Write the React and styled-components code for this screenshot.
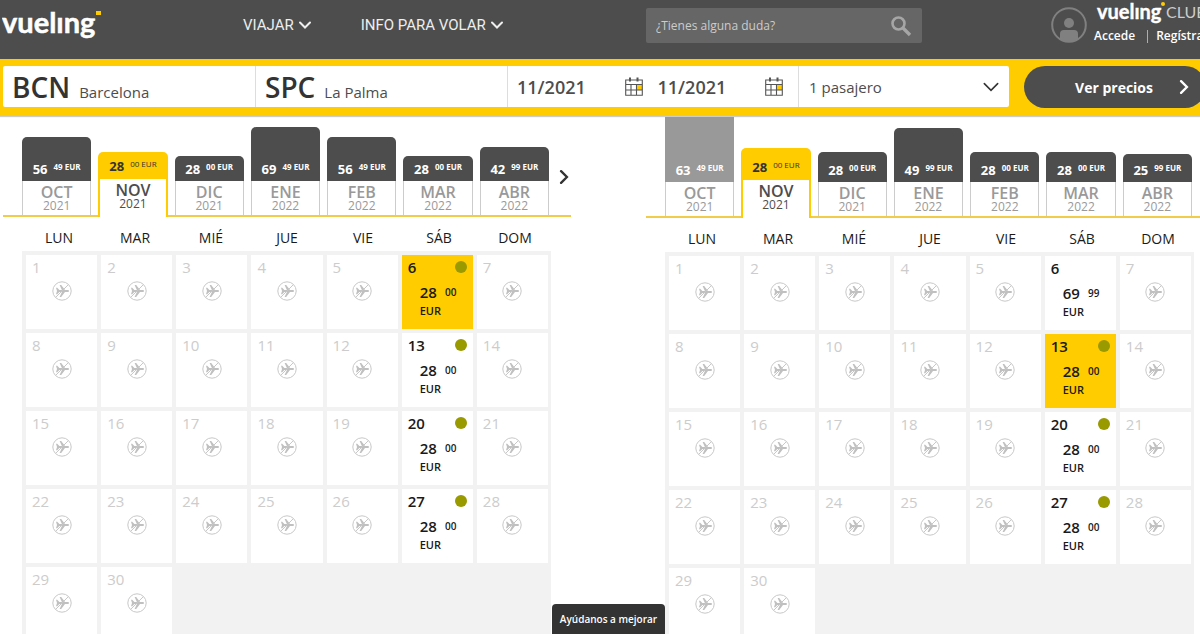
import styled, { createGlobalStyle } from "styled-components";

const GlobalStyle = createGlobalStyle`
  * {
    box-sizing: border-box;
  }
  body {
    margin: 0;
    overflow-x: hidden;
    background: #ffffff;
    color: #333333;
    font-family: "Open Sans", "Noto Sans", sans-serif;
  }
  button, input, select {
    font-family: inherit;
    border: 0;
    margin: 0;
    padding: 0;
    background: none;
    color: inherit;
  }
  a {
    color: inherit;
    text-decoration: none;
  }
`;

const Page = styled.div`
  overflow: hidden;
`;

const Header = styled.header`
  display: flex;
  align-items: flex-start;
  height: 59px;
  background: #4d4d4d;
  color: #ffffff;
`;

const LogoLink = styled.a`
  flex: 0 0 240px;
  padding-left: 2px;
`;

const LogoSvg = styled.svg`
  display: block;
  font-family: Lato, sans-serif;
  font-weight: 700;
`;

const Nav = styled.nav`
  display: flex;
  flex: 1;
  gap: 50px;
  padding: 15px 0 0 3px;
`;

const NavButton = styled.button`
  display: flex;
  align-items: center;
  gap: 5px;
  height: 20px;
  color: #eeeeee;
  font-family: Roboto, sans-serif;
  font-size: 15px;
  white-space: nowrap;
`;

const SearchBox = styled.form`
  display: flex;
  align-items: center;
  width: 276px;
  height: 35px;
  margin-top: 8px;
  padding: 0 10px;
  border-radius: 2px;
  background: #666666;
  input {
    flex: 1;
    min-width: 0;
    font-size: 12px;
    outline: none;
  }
  input::placeholder {
    color: #cccccc;
    opacity: 1;
  }
  button {
    display: flex;
  }
`;

const Account = styled.div`
  display: flex;
  gap: 7px;
  width: 278px;
  padding-left: 129px;
  margin-top: 7px;
  > svg {
    flex: none;
  }
`;

const AccountText = styled.div`
  flex: none;
  margin-top: -7px;
`;

const AccountLinks = styled.div`
  display: flex;
  font-size: 12px;
  line-height: 16px;
  font-weight: 600;
`;

const Separator = styled.span`
  width: 1px;
  height: 13px;
  margin: 2px 8px 0 12px;
  background: #d9b31a;
`;

const SearchBar = styled.form`
  display: flex;
  height: 57px;
  padding: 7px 0 0 3px;
  background: #ffcc00;
  box-shadow: 0 1px 1px #cccccc;
`;

const Fields = styled.div`
  display: grid;
  grid-template-columns: 252fr 252fr 291fr 211fr;
  flex: 1;
  height: 41px;
  border-radius: 2px;
  background: #ffffff;
`;

const Field = styled.div`
  display: flex;
  align-items: center;
  min-width: 0;
  padding-left: 9px;
  border-left: ${({ $first }) => ($first ? "0" : "1px solid #dddddd")};
`;

const AirportButton = styled.button`
  display: flex;
  align-items: baseline;
  gap: 9px;
  color: #4d4d4d;
  font-size: 15px;
  strong {
    color: #333333;
    font-size: 28px;
    line-height: 38px;
    font-weight: 600;
  }
`;

const DateInput = styled.label`
  display: flex;
  align-items: center;
  flex: 1;
  min-width: 0;
  input {
    flex: 1;
    min-width: 0;
    color: #4d4d4d;
    font-size: 18px;
    font-weight: 600;
  }
  svg {
    margin-right: 15px;
  }
`;

const PassengerSelect = styled.label`
  display: flex;
  align-items: center;
  flex: 1;
  padding: 0 10px 0 1px;
  select {
    flex: 1;
    appearance: none;
    color: #4d4d4d;
    font-size: 15px;
  }
`;

const PricesButton = styled.button`
  display: flex;
  align-items: center;
  justify-content: flex-end;
  gap: 24px;
  width: 182px;
  height: 42px;
  margin: 0 -6px 0 15px;
  padding-right: 15px;
  border-radius: 21px;
  background: #4d4d4d;
  color: #ffffff;
  font-size: 14px;
  font-weight: 700;
`;

const Calendars = styled.main`
  display: grid;
  grid-template-columns: 1fr 1fr;
  gap: 75px;
  margin: 0 -14px 0 3px;
`;

const Pane = styled.section`
  padding-top: ${({ $return }) => ($return ? "1px" : "0")};
`;

const Strip = styled.div`
  position: relative;
  display: grid;
  grid-template-columns: repeat(7, 1fr);
  gap: 7px;
  align-items: end;
  height: 101px;
  padding: 0 22px 0 19px;
  border-bottom: 2px solid #f0cc4a;
`;

const NextButton = styled.button`
  position: absolute;
  right: 0;
  top: 54px;
  display: flex;
`;

const Tab = styled.button`
  display: flex;
  flex-direction: column;
  min-width: 0;
  margin-bottom: ${({ $active }) => ($active ? "-2px" : "0")};
  color: ${({ $active }) => ($active ? "#4d4d4d" : "#999999")};
`;

const TabPrice = styled.span`
  display: flex;
  align-items: flex-end;
  justify-content: center;
  gap: 6px;
  width: 100%;
  padding-bottom: ${({ $active }) => ($active ? "4px" : "3px")};
  border-radius: ${({ $full }) => ($full ? "0" : "5px 5px 0 0")};
  background: ${({ $active, $full }) => ($active ? "#ffcc00" : $full ? "#999999" : "#4d4d4d")};
  color: ${({ $active }) => ($active ? "#333333" : "#ffffff")};
  font-size: 13px;
  line-height: 18px;
  font-weight: 700;
  small {
    font-size: 8px;
    line-height: 22px;
    font-weight: ${({ $active }) => ($active ? "400" : "700")};
  }
`;

const TabMonth = styled.span`
  width: 100%;
  height: ${({ $active }) => ($active ? "38px" : "34px")};
  padding-top: 2px;
  border: ${({ $active }) => ($active ? "solid #ffcc00" : "solid #cccccc")};
  border-width: ${({ $active }) => ($active ? "0 2px" : "0 1px")};
  background: #ffffff;
  font-size: 12px;
  line-height: 10px;
  strong {
    display: block;
    font-size: 16px;
    line-height: 18px;
    font-weight: 600;
  }
`;

const Month = styled.table`
  display: block;
  margin: 0 20px 0 19px;
  thead, tbody {
    display: block;
  }
  tr {
    display: grid;
    grid-template-columns: repeat(7, 1fr);
    gap: 4px;
  }
  thead tr {
    padding: 8px 0 0 1px;
  }
  th {
    padding: 0;
    color: #1a1a1a;
    font-size: 14px;
    line-height: 26px;
    font-weight: 400;
    text-align: center;
  }
  tbody {
    display: grid;
    gap: 4px;
    padding: 4px 3px 4px 4px;
    background: #f2f2f2;
  }
`;

const Day = styled.td`
  position: relative;
  height: 74px;
  padding: 2px 6px;
  background: ${({ $selected }) => ($selected ? "#ffcc00" : "#ffffff")};
  color: ${({ $open }) => ($open ? "#1a1a1a" : "#cccccc")};
  font-size: 15px;
  line-height: 20px;
  font-weight: ${({ $open }) => ($open ? "600" : "400")};
  > svg {
    display: block;
    margin: 4px auto 0;
  }
`;

const DayPrice = styled.button`
  display: grid;
  grid-template-columns: auto auto;
  column-gap: 4px;
  margin: 5px 0 0 12px;
  font-size: 15px;
  line-height: 20px;
  font-weight: 600;
  text-align: left;
  sup {
    font-size: 10px;
    line-height: 20px;
    vertical-align: top;
  }
  small {
    font-size: 11px;
    line-height: 17px;
  }
`;

const BestPrice = styled.i`
  position: absolute;
  top: 6px;
  right: 6px;
  width: 12px;
  height: 12px;
  border-radius: 50%;
  background: #999900;
`;

const FeedbackButton = styled.button`
  position: fixed;
  left: 46%;
  bottom: 0;
  width: 113px;
  height: 30px;
  border-radius: 4px 4px 0 0;
  background: #333333;
  color: #ffffff;
  font-size: 10px;
  font-weight: 600;
`;

const Chevron = ({ size = 12, direction = "down", stroke = 2 }) => (
  <svg width={size} height={size} viewBox="0 0 12 12" fill="none" stroke="currentColor" strokeWidth={stroke} strokeLinecap="round" aria-hidden="true">
    <path d={direction === "down" ? "M1 3.5 6 8.5 11 3.5" : "M3.5 1 8.5 6 3.5 11"} />
  </svg>
);

const Logo = () => (
  <LogoSvg width="104" height="46" fontSize="29" aria-label="vueling">
    <text x="0" y="33" fill="#ffffff" stroke="#ffffff" strokeWidth=".5">vuelıng</text>
    <path d="M94 11h5v4h-5z" fill="#ffcc00" />
  </LogoSvg>
);

const ClubLogo = () => (
  <LogoSvg width="124" height="28" fontSize="20" aria-label="vueling club">
    <text x="3" y="19" fill="#ffffff" stroke="#ffffff" strokeWidth=".4">vuelıng</text>
    <circle cx="69" cy="4" r="2" fill="#ffcc00" />
    <text x="72" y="18" fontSize="16" fontWeight="400" fill="#cccccc">CLUB</text>
  </LogoSvg>
);

const UserIcon = () => (
  <svg width="36" height="37" viewBox="0 0 36 37" aria-hidden="true">
    <circle cx="18" cy="18" r="16.8" fill="none" stroke="#808080" strokeWidth="2" />
    <circle cx="18" cy="16" r="5" fill="#808080" />
    <path d="M9 32v-5q0-4 4-4h10q4 0 4 4v5q-9 6-18 0z" fill="#808080" />
  </svg>
);

const SearchIcon = () => (
  <svg width="22" height="22" viewBox="0 0 22 22" fill="none" stroke="#a6a6a6" aria-hidden="true">
    <circle cx="8.5" cy="8.5" r="6" strokeWidth="2.6" />
    <path d="M13 13l7 7" strokeWidth="3.4" />
  </svg>
);

const CalendarIcon = () => (
  <svg width="18" height="19" viewBox="0 0 18 19" fill="none" stroke="#555555" aria-hidden="true">
    <path d="M11 7.5h6.3V13H11z" fill="#ffcc00" stroke="none" />
    <path d="M.7 3h16.6v15.3H.7zM.7 7.5h16.6M.7 13h16.6M6 7.5v11M11.5 7.5v11" strokeWidth="1.1" />
    <path d="M5 .5v4M12.5.5v4" strokeWidth="2" />
  </svg>
);

const NoFlightIcon = () => (
  <svg width="20" height="20" viewBox="0 0 20 20" fill="none" stroke="#c8c8c8" aria-hidden="true">
    <circle cx="10" cy="10" r="9.2" strokeWidth="1" />
    <path d="M4 6.8h1.2L7.4 9h2.5L7.6 3.9h1.6L13 9h2.6q1.5 0 1.5 1t-1.5 1H13l-3.8 5.1H7.6L9.9 11H7.4l-2.2 2.2H4l1-3.2z" fill="#c0c0c0" stroke="none" />
    <path d="M16.3 3.7 3.7 16.3" strokeWidth="1" />
  </svg>
);

const weekdays = ["LUN", "MAR", "MIÉ", "JUE", "VIE", "SÁB", "DOM"];

const outbound = {
  months: [
    { name: "OCT", year: 2021, price: 56, cents: "49", bar: 44 },
    { name: "NOV", year: 2021, price: 28, cents: "00", bar: 27, active: true },
    { name: "DIC", year: 2021, price: 28, cents: "00", bar: 25 },
    { name: "ENE", year: 2022, price: 69, cents: "49", bar: 54 },
    { name: "FEB", year: 2022, price: 56, cents: "49", bar: 44 },
    { name: "MAR", year: 2022, price: 28, cents: "00", bar: 25 },
    { name: "ABR", year: 2022, price: 42, cents: "99", bar: 34 },
  ],
  fares: { 6: [28, "00"], 13: [28, "00"], 20: [28, "00"], 27: [28, "00"] },
  selected: 6,
};

const inbound = {
  months: [
    { name: "OCT", year: 2021, price: 63, cents: "49", bar: 65, full: true },
    { name: "NOV", year: 2021, price: 28, cents: "00", bar: 32, active: true },
    { name: "DIC", year: 2021, price: 28, cents: "00", bar: 30 },
    { name: "ENE", year: 2022, price: 49, cents: "99", bar: 54 },
    { name: "FEB", year: 2022, price: 28, cents: "00", bar: 30 },
    { name: "MAR", year: 2022, price: 28, cents: "00", bar: 30 },
    { name: "ABR", year: 2022, price: 25, cents: "99", bar: 28 },
  ],
  fares: { 6: [69, "99"], 13: [28, "00"], 20: [28, "00"], 27: [28, "00"] },
  selected: 13,
};

const weeks = [0, 7, 14, 21, 28].map((start) =>
  weekdays.map((_, i) => start + i + 1).filter((day) => day <= 30)
);

const Calendar = ({ data, isReturn }) => (
  <Pane $return={isReturn}>
    <Strip>
      {data.months.map((month) => (
        <Tab key={month.name} $active={month.active}>
          <TabPrice $active={month.active} $full={month.full} style={{ height: month.bar }}>
            {month.price} <small>{month.cents} EUR</small>
          </TabPrice>
          <TabMonth $active={month.active}>
            <strong>{month.name}</strong>
            {month.year}
          </TabMonth>
        </Tab>
      ))}
      {!isReturn && (
        <NextButton aria-label="Meses siguientes">
          <Chevron size={14} direction="right" />
        </NextButton>
      )}
    </Strip>
    <Month>
      <thead>
        <tr>
          {weekdays.map((name) => <th key={name} scope="col">{name}</th>)}
        </tr>
      </thead>
      <tbody>
        {weeks.map((week) => (
          <tr key={week[0]}>
            {week.map((day) => {
              const fare = data.fares[day];
              return (
                <Day key={day} $open={!!fare} $selected={day === data.selected}>
                  {day}
                  {!fare && <NoFlightIcon />}
                  {fare && (
                    <DayPrice>
                      <span>{fare[0]}</span>
                      <sup>{fare[1]}</sup>
                      <small>EUR</small>
                    </DayPrice>
                  )}
                  {fare && fare[0] === 28 && <BestPrice />}
                </Day>
              );
            })}
          </tr>
        ))}
      </tbody>
    </Month>
  </Pane>
);

const App = () => (
  <Page>
    <GlobalStyle />
    <Header>
      <LogoLink href="#"><Logo /></LogoLink>
      <Nav>
        <NavButton>VIAJAR <Chevron /></NavButton>
        <NavButton>INFO PARA VOLAR <Chevron /></NavButton>
      </Nav>
      <SearchBox>
        <input type="text" placeholder="¿Tienes alguna duda?" aria-label="¿Tienes alguna duda?" />
        <button type="button" aria-label="Buscar"><SearchIcon /></button>
      </SearchBox>
      <Account>
        <UserIcon />
        <AccountText>
          <ClubLogo />
          <AccountLinks>
            <a href="#">Accede</a>
            <Separator />
            <a href="#">Regístrate</a>
          </AccountLinks>
        </AccountText>
      </Account>
    </Header>
    <SearchBar>
      <Fields>
        <Field $first>
          <AirportButton type="button"><strong>BCN</strong> Barcelona</AirportButton>
        </Field>
        <Field>
          <AirportButton type="button"><strong>SPC</strong> La Palma</AirportButton>
        </Field>
        <Field>
          <DateInput>
            <input type="text" defaultValue="11/2021" aria-label="Ida" />
            <CalendarIcon />
          </DateInput>
          <DateInput>
            <input type="text" defaultValue="11/2021" aria-label="Vuelta" />
            <CalendarIcon />
          </DateInput>
        </Field>
        <Field>
          <PassengerSelect>
            <select aria-label="Pasajeros">
              <option>1 pasajero</option>
            </select>
            <Chevron size={16} stroke={1.2} />
          </PassengerSelect>
        </Field>
      </Fields>
      <PricesButton type="button">Ver precios <Chevron size={14} direction="right" /></PricesButton>
    </SearchBar>
    <Calendars>
      <Calendar data={outbound} />
      <Calendar data={inbound} isReturn />
    </Calendars>
    <FeedbackButton>Ayúdanos a mejorar</FeedbackButton>
  </Page>
);

export default App;
